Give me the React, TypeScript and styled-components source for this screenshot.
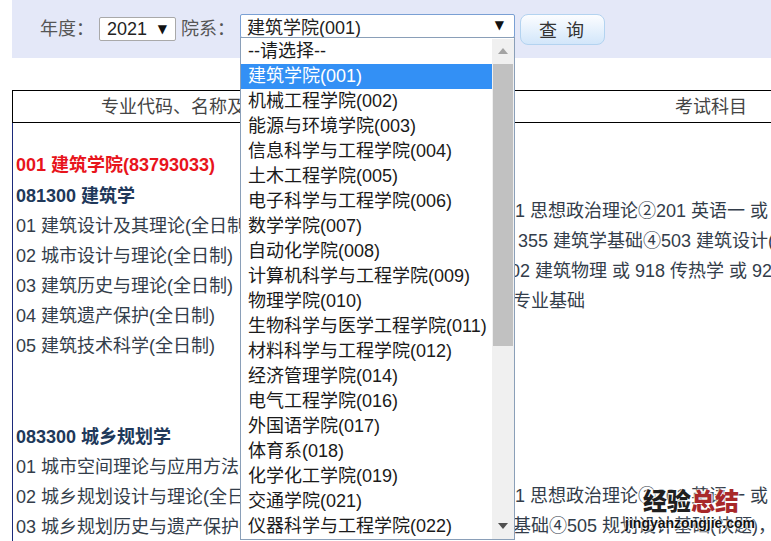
import React from "react";
import styled, { createGlobalStyle } from "styled-components";

const GlobalStyle = createGlobalStyle`
  html, body {
    margin: 0;
    padding: 0;
    overflow: hidden;
    background: #ffffff;
  }
  body {
    width: 771px;
    height: 541px;
    font-family: "Liberation Sans", "Noto Sans CJK SC", sans-serif;
    font-size: 18px;
    color: #333;
  }
`;

const Page = styled.div`
  position: relative;
  width: 759px;
  height: 541px;
  padding-left: 12px;
  overflow: hidden;
`;

const SearchBar = styled.div`
  display: flex;
  align-items: center;
  gap: 5px;
  height: 58px;
  width: 1000px;
  padding-left: 28px;
  background: #e4e8f8;
`;

const Label = styled.span`
  color: #555;
  font-size: 18px;
  line-height: 24px;
  white-space: nowrap;
`;

const YearSelect = styled.div`
  display: flex;
  align-items: center;
  justify-content: space-between;
  box-sizing: border-box;
  width: 77px;
  height: 24px;
  padding: 0 8px 0 7px;
  border: 1px solid #a9a9a9;
  border-radius: 2px;
  background: #fff;
  color: #222;
  line-height: 22px;
`;

const Caret = styled.span`
  font-family: "DejaVu Sans", sans-serif;
  font-size: 12px;
  color: #111;
`;

const DeptWrap = styled.div`
  position: relative;
  margin-bottom: 7px;
`;

const DeptSelect = styled.div`
  display: flex;
  align-items: flex-end;
  justify-content: space-between;
  box-sizing: border-box;
  width: 275px;
  height: 24px;
  padding: 0 10px 0 6px;
  border: 1px solid #7aa0d4;
  border-radius: 2px;
  background: #fff;
  color: #222;
  line-height: 17px;
  & > span:last-child {
    align-self: center;
  }
`;

const Dropdown = styled.div`
  position: absolute;
  top: 23px;
  left: 0;
  z-index: 10;
  display: flex;
  box-sizing: border-box;
  width: 275px;
  height: 503px;
  padding-top: 1px;
  border: 1px solid #8a9fb8;
  background: #fff;
`;

const OptionList = styled.div`
  flex: 1;
  display: flex;
  flex-direction: column;
`;

const Option = styled.div<{ $selected?: boolean }>`
  height: 25px;
  line-height: 25px;
  padding-left: 7px;
  white-space: nowrap;
  color: ${(p) => (p.$selected ? "#fff" : "#1a1a1a")};
  background: ${(p) => (p.$selected ? "#3390f5" : "transparent")};
`;

const ScrollBar = styled.div`
  display: flex;
  flex-direction: column;
  width: 22px;
  background: #f0f0f0;
`;

const ScrollButton = styled.div`
  display: flex;
  align-items: center;
  justify-content: center;
  height: 25px;
`;

const Thumb = styled.div`
  height: 282px;
  margin: 0 1px;
  background: #c1c1c1;
`;

const ScrollSpace = styled.div`
  flex: 1;
`;

const QueryButton = styled.div`
  display: flex;
  align-items: center;
  justify-content: center;
  box-sizing: border-box;
  width: 85px;
  height: 31px;
  border: 1px solid #b3d3f0;
  border-radius: 8px;
  background: linear-gradient(#fcfdff, #d2e6fa);
  color: #333;
  font-size: 18px;
  letter-spacing: 2px;
  white-space: pre;
`;

const Table = styled.div`
  margin-top: 32px;
  width: 1100px;
`;

const HeaderRow = styled.div`
  display: grid;
  grid-template-columns: 392px 72px 468px 1fr;
  height: 31px;
  border: 1px solid #000;
  border-right: none;
`;

const HeaderCell = styled.div`
  text-align: center;
  line-height: 32px;
  color: #444;
  white-space: nowrap;
  overflow: hidden;
`;

const Body = styled.div`
  border-left: 1px solid #1c2a7a;
  padding-top: 27px;
  height: 420px;
`;

const CollegeTitle = styled.div`
  padding-left: 3px;
  line-height: 30px;
  font-weight: bold;
  color: #e8141c;
`;

const MajorRow = styled.div<{ $gap: number }>`
  display: grid;
  grid-template-columns: 392px 72px 468px 1fr;
  margin-top: ${(p) => p.$gap}px;
`;

const MajorCell = styled.div`
  padding-left: 3px;
  line-height: 30px;
  white-space: nowrap;
  color: #333d4a;
`;

const MajorName = styled.div`
  font-weight: bold;
  color: #20385a;
`;

const ExamCell = styled.div<{ $offset: number }>`
  grid-column: 3 / span 2;
  padding-top: ${(p) => p.$offset}px;
  line-height: 30px;
  white-space: nowrap;
  color: #333d4a;
`;

const Watermark = styled.div`
  position: absolute;
  right: 16px;
  bottom: 9px;
  z-index: 20;
  display: flex;
  flex-direction: column;
  align-items: center;
  text-shadow: 0 0 2px #fff, 0 0 2px #fff, 0 0 3px #fff;
`;

const MarkTitle = styled.div`
  font-family: "Noto Sans CJK SC", sans-serif;
  font-size: 24px;
  font-weight: 900;
  line-height: 28px;
  margin-left: 2px;
  & > span:first-child {
    color: #1f1f1f;
  }
  & > span:last-child {
    color: #a8282a;
  }
`;

const MarkUrl = styled.div`
  font-family: "Liberation Sans", sans-serif;
  font-size: 14px;
  font-weight: bold;
  line-height: 18px;
  color: #111;
`;

const colleges = [
  "--请选择--",
  "建筑学院(001)",
  "机械工程学院(002)",
  "能源与环境学院(003)",
  "信息科学与工程学院(004)",
  "土木工程学院(005)",
  "电子科学与工程学院(006)",
  "数学学院(007)",
  "自动化学院(008)",
  "计算机科学与工程学院(009)",
  "物理学院(010)",
  "生物科学与医学工程学院(011)",
  "材料科学与工程学院(012)",
  "经济管理学院(014)",
  "电气工程学院(016)",
  "外国语学院(017)",
  "体育系(018)",
  "化学化工学院(019)",
  "交通学院(021)",
  "仪器科学与工程学院(022)",
];

const UpArrow = () => (
  <svg width="10" height="6" viewBox="0 0 10 6">
    <path d="M0 6 L5 0 L10 6 Z" fill="#a3a3a3" />
  </svg>
);

const DownArrow = () => (
  <svg width="10" height="6" viewBox="0 0 10 6">
    <path d="M0 0 L10 0 L5 6 Z" fill="#505050" />
  </svg>
);

export default function App() {
  return (
    <>
      <GlobalStyle />
      <Page>
        <SearchBar>
          <Label>年度：</Label>
          <YearSelect>
            <span>2021</span>
            <Caret>▼</Caret>
          </YearSelect>
          <Label>院系：</Label>
          <DeptWrap>
            <DeptSelect>
              <span>建筑学院(001)</span>
              <Caret>▼</Caret>
            </DeptSelect>
            <Dropdown>
              <OptionList>
                {colleges.map((c, i) => (
                  <Option key={c} $selected={i === 1}>
                    {c}
                  </Option>
                ))}
              </OptionList>
              <ScrollBar>
                <ScrollButton>
                  <UpArrow />
                </ScrollButton>
                <Thumb />
                <ScrollSpace />
                <ScrollButton>
                  <DownArrow />
                </ScrollButton>
              </ScrollBar>
            </Dropdown>
          </DeptWrap>
          <QueryButton>查 询</QueryButton>
        </SearchBar>

        <Table>
          <HeaderRow>
            <HeaderCell>专业代码、名称及研究方向</HeaderCell>
            <HeaderCell>人数</HeaderCell>
            <HeaderCell>考试科目</HeaderCell>
            <HeaderCell>备注</HeaderCell>
          </HeaderRow>
          <Body>
            <CollegeTitle>001 建筑学院(83793033)</CollegeTitle>
            <MajorRow $gap={1}>
              <MajorCell>
                <MajorName>081300 建筑学</MajorName>
                <div>01 建筑设计及其理论(全日制)</div>
                <div>02 城市设计与理论(全日制)</div>
                <div>03 建筑历史与理论(全日制)</div>
                <div>04 建筑遗产保护(全日制)</div>
                <div>05 建筑技术科学(全日制)</div>
              </MajorCell>
              <ExamCell $offset={15}>
                <div>①101 思想政治理论②201 英语一 或 203 日语</div>
                <div>或③ 355 建筑学基础④503 建筑设计(6小时快题)</div>
                <div>⑤ 902 建筑物理 或 918 传热学 或 925 建筑构造</div>
                <div>建筑专业基础</div>
              </ExamCell>
            </MajorRow>
            <MajorRow $gap={61}>
              <MajorCell>
                <MajorName>083300 城乡规划学</MajorName>
                <div>01 城市空间理论与应用方法(全日制)</div>
                <div>02 城乡规划设计与理论(全日制)</div>
                <div>03 城乡规划历史与遗产保护(全日制)</div>
              </MajorCell>
              <ExamCell $offset={59}>
                <div>①101 思想政治理论②201 英语一 或 203 日语</div>
                <div>城规基础④505 规划设计基础(快题)，6小时</div>
              </ExamCell>
            </MajorRow>
          </Body>
        </Table>

        <Watermark>
          <MarkTitle>
            <span>经验</span>
            <span>总结</span>
          </MarkTitle>
          <MarkUrl>jingyanzongjie.com</MarkUrl>
        </Watermark>
      </Page>
    </>
  );
}
